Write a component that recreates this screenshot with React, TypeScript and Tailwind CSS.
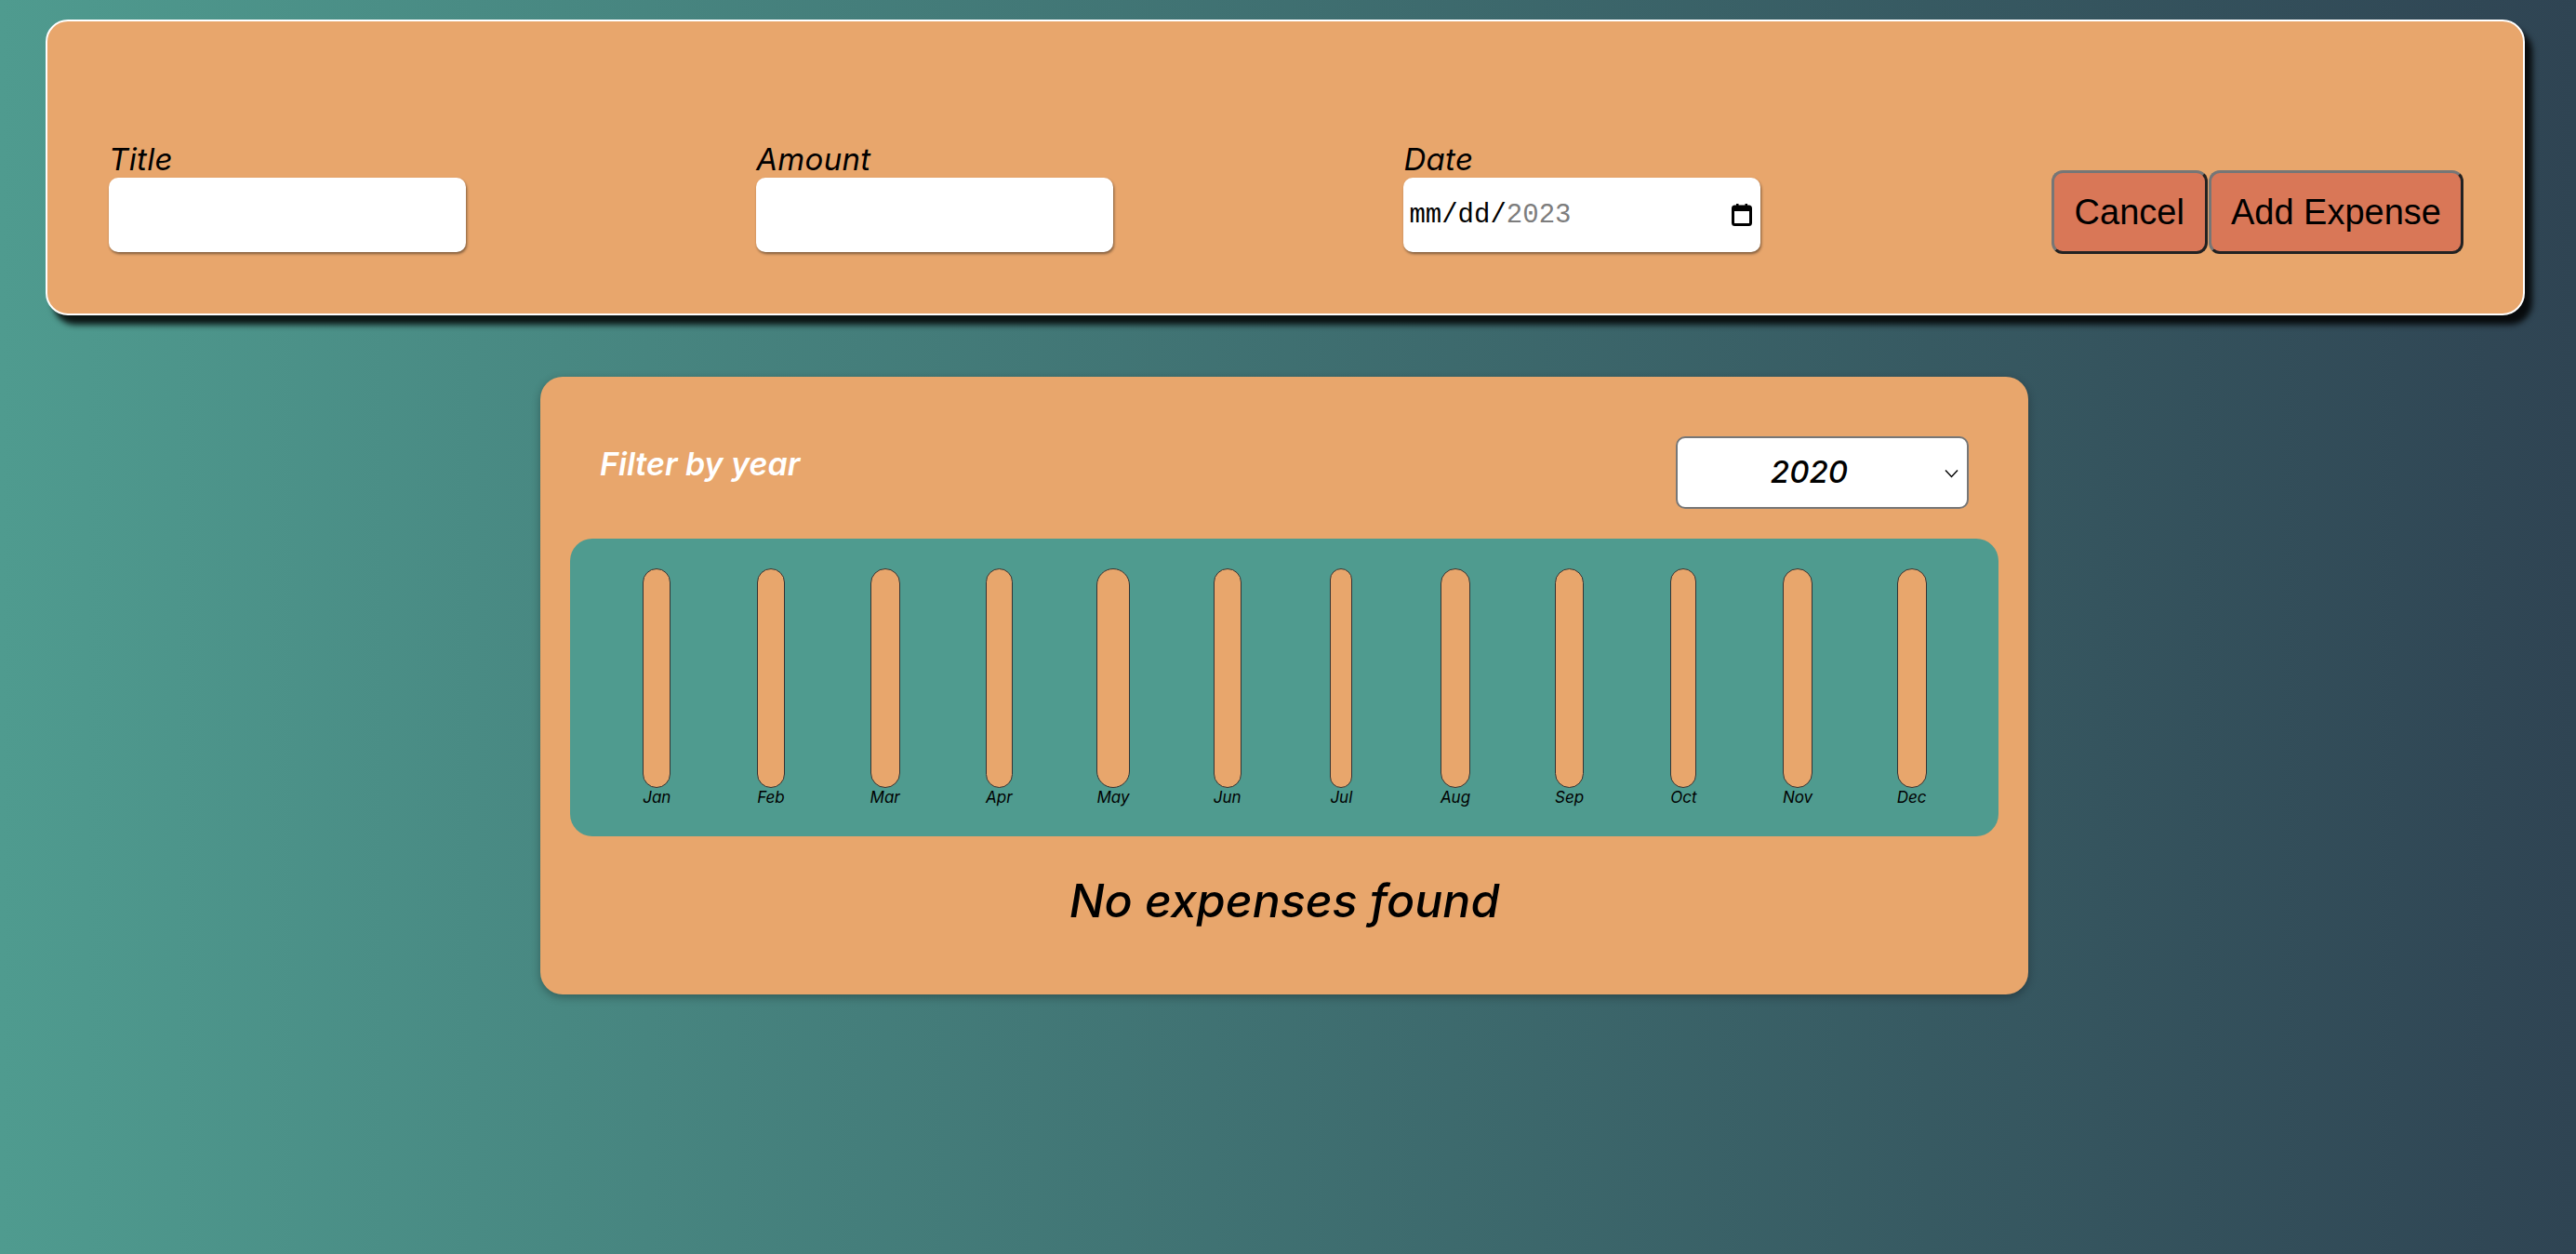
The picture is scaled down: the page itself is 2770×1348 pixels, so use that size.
import React from 'react';

const months = ['Jan', 'Feb', 'Mar', 'Apr', 'May', 'Jun', 'Jul', 'Aug', 'Sep', 'Oct', 'Nov', 'Dec'];

function Field({ label, children }: { label: string; children: React.ReactNode }) {
  return (
    <div className="flex flex-col">
      <label className="mb-[2px] text-[33px] leading-[36px] tracking-[0.01em] font-normal italic text-black">{label}</label>
      {children}
    </div>
  );
}

function CalendarIcon() {
  return (
    <svg width="22" height="24" viewBox="0 0 22 24" fill="none">
      <rect x="5" y="0" width="2.5" height="4" fill="#000" />
      <rect x="14.5" y="0" width="2.5" height="4" fill="#000" />
      <rect x="1.5" y="3" width="19" height="19.5" rx="2" stroke="#000" strokeWidth="3" />
      <rect x="1.5" y="3" width="19" height="5" fill="#000" />
    </svg>
  );
}

export default function App() {
  return (
    <div
      className="min-h-screen w-full overflow-hidden bg-[linear-gradient(to_right,#4f9b8f,#2f4453)] pt-[21px] pb-[40px]"
      style={{ fontFamily: 'Inter, "Noto Sans", sans-serif' }}
    >
      {/* new expense form */}
      <div className="ml-[49px] mr-[55px] rounded-[24px] border-2 border-white bg-[#e8a66c] pt-[130px] pb-[66px] pl-[66px] pr-[64px] shadow-[8px_10px_6px_rgba(0,0,0,0.85)]">
        <div className="flex items-end justify-between">
          <Field label="Title">
            <input type="text" className="h-[80px] w-[384px] rounded-[10px] bg-white shadow-[1px_2px_3px_rgba(0,0,0,0.45)] outline-none" />
          </Field>
          <Field label="Amount">
            <input type="number" className="h-[80px] w-[384px] rounded-[10px] bg-white shadow-[1px_2px_3px_rgba(0,0,0,0.45)] outline-none" />
          </Field>
          <Field label="Date">
            <div className="flex h-[80px] w-[384px] items-center justify-between rounded-[10px] bg-white pl-[6px] pr-[9px] shadow-[1px_2px_3px_rgba(0,0,0,0.45)]">
              <span className="text-[29px] leading-none" style={{ fontFamily: '"Liberation Mono", monospace' }}>
                <span className="text-black">mm/dd/</span>
                <span className="text-[#7d7d7d]">2023</span>
              </span>
              <CalendarIcon />
            </div>
          </Field>
          <div className="mb-[-2px] flex gap-[1px]" style={{ fontFamily: '"Liberation Sans", Arial, sans-serif' }}>
            <button className="h-[90px] rounded-[12px] border-[3px] border-t-[#767676] border-l-[#767676] border-b-[#222] border-r-[#222] bg-[#d97757] px-[22px] text-[38px] text-black">
              Cancel
            </button>
            <button className="h-[90px] rounded-[12px] border-[3px] border-t-[#767676] border-l-[#767676] border-b-[#222] border-r-[#222] bg-[#d97757] px-[21px] text-[38px] text-black">
              Add Expense
            </button>
          </div>
        </div>
      </div>

      {/* expenses */}
      <div className="mt-[66px] ml-[581px] w-[1600px] rounded-[24px] bg-[#e8a66c] p-8 shadow-[0_3px_10px_rgba(0,0,0,0.3)]">
        <div className="flex items-start justify-between px-8 py-8">
          <span className="mt-[10px] text-[34px] leading-[40px] font-semibold italic text-white">Filter by year</span>
          <div className="relative flex h-[78px] w-[315px] items-center justify-center rounded-[10px] border-2 border-[#777] bg-white pr-[28px]">
            <span className="text-[33px] font-medium italic text-black">2020</span>
            <svg className="absolute right-[9px] top-[33px]" width="15" height="10" viewBox="0 0 15 10" fill="none">
              <path d="M1 1.5l6.5 7 6.5-7" stroke="#000" strokeWidth="1.4" />
            </svg>
          </div>
        </div>

        <div className="grid grid-cols-12 rounded-[24px] bg-[#4f9b8f] p-8">
          {months.map((m) => (
            <div key={m} className="flex justify-center">
              <div className="flex flex-col items-stretch">
                <div className="h-[236px] rounded-full border-[1.5px] border-[#333] bg-[#e8a66c]" />
                <span className="text-center text-[17px] leading-[20px] font-normal italic text-black">{m}</span>
              </div>
            </div>
          ))}
        </div>

        <p className="py-[39px] text-center text-[50px] leading-[60px] font-medium italic text-black">No expenses found</p>
      </div>
    </div>
  );
}
